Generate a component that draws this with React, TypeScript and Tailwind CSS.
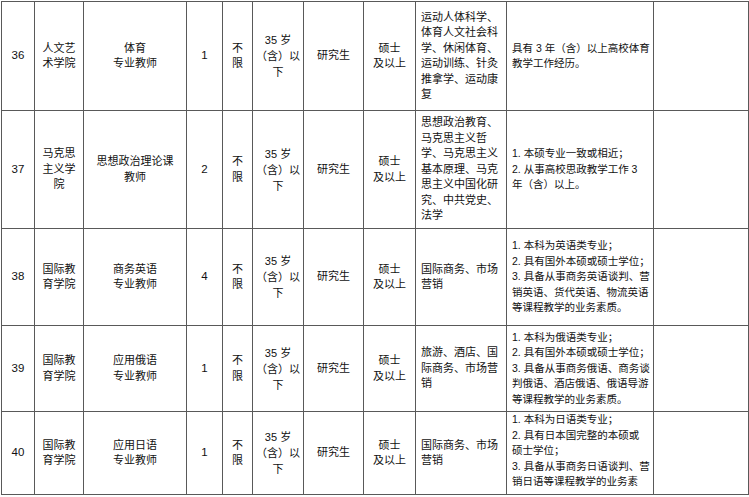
import React from 'react';

interface Row {
  no: string;
  college: string[];
  post: string[];
  count: string;
  major: string[];
  req: string[];
  reqTop?: boolean;
}

const rows: Row[] = [
  {
    no: '36',
    college: ['人文艺', '术学院'],
    post: ['体育', '专业教师'],
    count: '1',
    major: ['运动人体科学、', '体育人文社会科', '学、休闲体育、', '运动训练、针灸', '推拿学、运动康', '复'],
    req: ['具有 3 年（含）以上高校体育', '教学工作经历。'],
  },
  {
    no: '37',
    college: ['马克思', '主义学', '院'],
    post: ['思想政治理论课', '教师'],
    count: '2',
    major: ['思想政治教育、', '马克思主义哲', '学、马克思主义', '基本原理、马克', '思主义中国化研', '究、中共党史、', '法学'],
    req: ['1. 本硕专业一致或相近；', '2. 从事高校思政教学工作 3', '年（含）以上。'],
  },
  {
    no: '38',
    college: ['国际教', '育学院'],
    post: ['商务英语', '专业教师'],
    count: '4',
    major: ['国际商务、市场', '营销'],
    req: ['1. 本科为英语类专业；', '2. 具有国外本硕或硕士学位；', '3. 具备从事商务英语谈判、营', '销英语、货代英语、物流英语', '等课程教学的业务素质。'],
  },
  {
    no: '39',
    college: ['国际教', '育学院'],
    post: ['应用俄语', '专业教师'],
    count: '1',
    major: ['旅游、酒店、国', '际商务、市场营', '销'],
    req: ['1. 本科为俄语类专业；', '2. 具有国外本硕或硕士学位；', '3. 具备从事商务俄语、商务谈', '判俄语、酒店俄语、俄语导游', '等课程教学的业务素质。'],
  },
  {
    no: '40',
    college: ['国际教', '育学院'],
    post: ['应用日语', '专业教师'],
    count: '1',
    major: ['国际商务、市场', '营销'],
    // the last row is cut at the bottom edge of the sheet
    req: ['1. 本科为日语类专业；', '2. 具有日本国完整的本硕或', '硕士学位；', '3. 具备从事商务日语谈判、营', '销日语等课程教学的业务素'],
    reqTop: true,
  },
];

const Lines = ({ items }: { items: string[] }) => (
  <div>
    {items.map((t, i) => (
      <div key={i} className="whitespace-nowrap">{t}</div>
    ))}
  </div>
);

const center = 'bg-white flex items-center justify-center text-center overflow-hidden';
const left = 'bg-white flex items-center justify-start pl-[5px] overflow-hidden';

export default function App() {
  return (
    <div className="bg-white w-[749px] h-[497px] pt-px pl-px">
      <div
        className="grid w-fit bg-[#595959] p-px gap-px text-[11px] leading-[15.5px] text-[#111]
          grid-cols-[32px_48px_102px_35px_29px_50px_59px_51px_90px_146px_94px]
          grid-rows-[108px_117px_96px_85px_82px]"
        style={{ fontFamily: '"Liberation Sans", "Noto Sans CJK SC", sans-serif' }}
      >
        {rows.map((r) => (
          <React.Fragment key={r.no}>
            <div className={`${center} text-[11.5px]`}>{r.no}</div>
            <div className={center}><Lines items={r.college} /></div>
            <div className={center}><Lines items={r.post} /></div>
            <div className={`${center} text-[11.5px]`}>{r.count}</div>
            <div className={center}><Lines items={['不', '限']} /></div>
            <div className={`${center} leading-[16px]`}><Lines items={['35 岁', '（含）以', '下']} /></div>
            <div className={center}>研究生</div>
            <div className={center}><Lines items={['硕士', '及以上']} /></div>
            <div className={left}><Lines items={r.major} /></div>
            <div
              className={`${r.reqTop ? 'bg-white flex items-start pl-[5px] overflow-hidden' : left} text-[10.5px]`}
            >
              <Lines items={r.req} />
            </div>
            <div className="bg-white" />
          </React.Fragment>
        ))}
      </div>
    </div>
  );
}
